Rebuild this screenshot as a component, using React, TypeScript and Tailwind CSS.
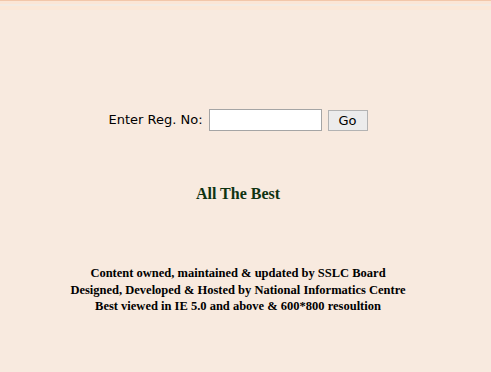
import { useState } from 'react';

export default function App() {
  const [reg, setReg] = useState('');

  return (
    <div className="min-h-[372px] w-full bg-[#f8eadf]">
      {/* faint strip along the top edge */}
      <div className="h-px bg-[#f2c7aa]" />
      <div className="h-[3px] bg-[#fbe6d6]" />
      <div className="h-[2px] bg-[#f3ebe3]" />
      <div className="h-[4px] bg-[#fbe8d8]" />

      <div className="w-[476px]">
        <form
          className="mt-[99px] flex items-center justify-center"
          onSubmit={(e) => e.preventDefault()}
        >
          <label
            htmlFor="reg"
            className="mr-[6px] text-[13px] text-black"
            style={{ fontFamily: '"DejaVu Sans", Verdana, sans-serif' }}
          >
            Enter Reg. No:
          </label>
          <input
            id="reg"
            value={reg}
            onChange={(e) => setReg(e.target.value)}
            className="h-[22px] w-[113px] border border-[#a5a5a5] bg-white px-1 text-[13px] outline-none"
          />
          <button
            type="submit"
            className="ml-[6px] h-[21px] w-[40px] border border-[#b3b3b3] bg-[#ececec] text-[13px] text-black"
            style={{ fontFamily: '"DejaVu Sans", Verdana, sans-serif' }}
          >
            Go
          </button>
        </form>

        <div
          className="mt-[53px] text-center text-[16px] leading-[20px] font-bold text-[#0f3311]"
          style={{ fontFamily: '"Liberation Serif", "Times New Roman", serif' }}
        >
          All The Best
        </div>

        <div
          className="mt-[61px] text-center text-[12.5px] leading-[16.5px] font-bold text-black"
          style={{ fontFamily: '"Liberation Serif", "Times New Roman", serif' }}
        >
          <div>Content owned, maintained &amp; updated by SSLC Board</div>
          <div>Designed, Developed &amp; Hosted by National Informatics Centre</div>
          <div>Best viewed in IE 5.0 and above &amp; 600*800 resoultion</div>
        </div>
      </div>
    </div>
  );
}
